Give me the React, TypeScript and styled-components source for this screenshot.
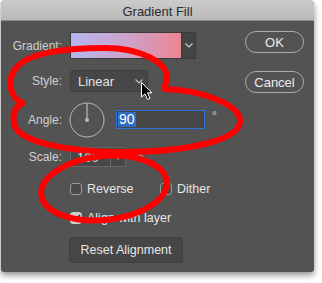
import React from 'react';
import styled, { createGlobalStyle } from 'styled-components';

const GlobalStyle = createGlobalStyle`
  html, body {
    margin: 0;
    padding: 0;
    background: #ffffff;
    width: 322px;
    height: 283px;
    overflow: hidden;
  }
  body {
    font-family: 'Liberation Sans', Arial, sans-serif;
    position: relative;
  }
`;

const Window = styled.div`
  width: 313px;
  height: 272px;
  margin-left: 1px;
  background: #535353;
  border-radius: 5px 5px 3px 3px;
  box-shadow: 0 3px 6px rgba(0, 0, 0, 0.45);
  overflow: hidden;
  display: flex;
  flex-direction: column;
`;

const TitleBar = styled.div`
  height: 21px;
  flex-shrink: 0;
  background: linear-gradient(#cbcbcb, #b9b9b9);
  border-bottom: 1px solid #8e8e8e;
  box-sizing: border-box;
  display: flex;
  align-items: center;
  justify-content: center;
  font-size: 13px;
  color: #2c2c2c;
  padding-top: 2px;
`;

const Body = styled.div`
  display: flex;
  justify-content: space-between;
  padding: 11px 10px 0 8px;
`;

const Form = styled.div`
  display: flex;
  flex-direction: column;
`;

const Row = styled.div<{ $mt: number; $h: number }>`
  display: flex;
  align-items: center;
  margin-top: ${(p) => p.$mt}px;
  height: ${(p) => p.$h}px;
`;

const Label = styled.div`
  width: 53px;
  margin-right: 8px;
  flex-shrink: 0;
  text-align: right;
  font-size: 12px;
  color: #d0d0d0;
`;

const Swatch = styled.div`
  width: 112px;
  height: 27px;
  box-sizing: border-box;
  border: 1px solid #3b3b3b;
  background: linear-gradient(90deg, #b5b6ee 0%, #cda3cb 50%, #eb8590 100%);
`;

const DropButton = styled.div<{ $w: number; $h: number }>`
  width: ${(p) => p.$w}px;
  height: ${(p) => p.$h}px;
  box-sizing: border-box;
  display: flex;
  align-items: center;
  justify-content: center;
  background: #444444;
  border: 1px solid #3b3b3b;
  border-left: none;
`;

const Select = styled.div`
  width: 78px;
  height: 22px;
  box-sizing: border-box;
  border: 1px solid #3e3e3e;
  border-radius: 3px;
  background: #474747;
  display: flex;
  align-items: center;
  justify-content: space-between;
  padding: 0 4px 0 7px;
  font-size: 13px;
  color: #e4e4e4;
`;

const Dial = styled.svg`
  width: 36px;
  height: 36px;
  margin-left: -1px;
  flex-shrink: 0;
`;

const AngleInput = styled.div`
  width: 89px;
  height: 19px;
  margin-left: 11px;
  box-sizing: border-box;
  border: 1px solid #2a72d6;
  background: #464646;
  display: flex;
  align-items: center;
  padding-left: 1px;
`;

const Selected = styled.span`
  background: #2f6dbf;
  color: #ffffff;
  font-size: 14px;
  line-height: 15px;
  padding: 0 1px;
`;

const Unit = styled.span<{ $ml: number; $up?: boolean }>`
  margin-left: ${(p) => p.$ml}px;
  font-size: 12px;
  color: #d8d8d8;
  align-self: ${(p) => (p.$up ? 'flex-start' : 'center')};
  margin-top: ${(p) => (p.$up ? '7px' : '0')};
`;

const ScaleBox = styled.div`
  display: flex;
  height: 20px;
`;

const ScaleInput = styled.div`
  width: 41px;
  height: 20px;
  box-sizing: border-box;
  border: 1px solid #676767;
  background: #474747;
  font-size: 13px;
  color: #e4e4e4;
  display: flex;
  align-items: center;
  padding-left: 6px;
`;

const ScaleDrop = styled.div`
  width: 15px;
  height: 20px;
  box-sizing: border-box;
  border: 1px solid #676767;
  border-left: none;
  background: #474747;
  display: flex;
  align-items: center;
  justify-content: center;
`;

const Check = styled.label<{ $w?: number }>`
  display: flex;
  align-items: center;
  width: ${(p) => (p.$w ? `${p.$w}px` : 'auto')};
  font-size: 12.5px;
  color: #e6e6e6;
`;

const Box = styled.span<{ $on?: boolean }>`
  width: 12px;
  height: 12px;
  box-sizing: border-box;
  border-radius: 3px;
  border: 1px solid ${(p) => (p.$on ? '#cfcfcf' : '#9c9c9c')};
  background: ${(p) => (p.$on ? '#cfcfcf' : '#4a4a4a')};
  margin-right: 5px;
  display: flex;
  align-items: center;
  justify-content: center;
  flex-shrink: 0;
`;

const PlainButton = styled.div`
  width: 114px;
  height: 26px;
  margin-left: -1px;
  box-sizing: border-box;
  border: 1px solid #3f3f3f;
  border-radius: 3px;
  background: #464646;
  display: flex;
  align-items: center;
  justify-content: center;
  font-size: 12.5px;
  color: #e6e6e6;
`;

const Actions = styled.div`
  width: 59px;
  margin-top: -1px;
  display: flex;
  flex-direction: column;
  gap: 18px;
`;

const PillButton = styled.div`
  height: 22px;
  box-sizing: border-box;
  border: 1px solid #a9a9a9;
  border-radius: 11px;
  display: flex;
  align-items: center;
  justify-content: center;
  font-size: 13px;
  color: #ececec;
`;

const Overlay = styled.svg`
  position: absolute;
  top: 0;
  left: 0;
  width: 322px;
  height: 283px;
  pointer-events: none;
`;

function Chevron({ color = '#cfcfcf' }: { color?: string }) {
  return (
    <svg width="8" height="5" viewBox="0 0 8 5">
      <polyline points="0.5,0.5 4,4 7.5,0.5" fill="none" stroke={color} strokeWidth="1.1" />
    </svg>
  );
}

function Tick() {
  return (
    <svg width="9" height="8" viewBox="0 0 9 8">
      <polyline points="1,4 3.5,6.5 8,1" fill="none" stroke="#333" strokeWidth="1.8" />
    </svg>
  );
}

export default function App() {
  return (
    <>
      <GlobalStyle />
      <Window>
        <TitleBar>Gradient Fill</TitleBar>
        <Body>
          <Form>
            <Row $mt={0} $h={27}>
              <Label>Gradient:</Label>
              <Swatch />
              <DropButton $w={14} $h={27}>
                <Chevron />
              </DropButton>
            </Row>
            <Row $mt={11} $h={22}>
              <Label>Style:</Label>
              <Select>
                Linear
                <Chevron color="#bdbdbd" />
              </Select>
            </Row>
            <Row $mt={10} $h={35}>
              <Label>Angle:</Label>
              <Dial viewBox="0 0 36 36">
                <circle cx="18" cy="18" r="17" fill="none" stroke="#b8b8b8" strokeWidth="1" />
                <line x1="18" y1="18" x2="18" y2="1.5" stroke="#cfcfcf" strokeWidth="1" />
                <circle cx="18" cy="18" r="2" fill="#b8b8b8" />
              </Dial>
              <AngleInput>
                <Selected>90</Selected>
              </AngleInput>
              <Unit $ml={7} $up>
                °
              </Unit>
            </Row>
            <Row $mt={10} $h={20}>
              <Label>Scale:</Label>
              <ScaleBox>
                <ScaleInput>100</ScaleInput>
                <ScaleDrop>
                  <Chevron color="#bdbdbd" />
                </ScaleDrop>
              </ScaleBox>
              <Unit $ml={7}>%</Unit>
            </Row>
            <Row $mt={15} $h={14}>
              <Label />
              <Check $w={90}>
                <Box />
                Reverse
              </Check>
              <Check>
                <Box />
                Dither
              </Check>
            </Row>
            <Row $mt={15} $h={14}>
              <Label />
              <Check>
                <Box $on>
                  <Tick />
                </Box>
                Align with layer
              </Check>
            </Row>
            <Row $mt={12} $h={26}>
              <Label />
              <PlainButton>Reset Alignment</PlainButton>
            </Row>
          </Form>
          <Actions>
            <PillButton>OK</PillButton>
            <PillButton>Cancel</PillButton>
          </Actions>
        </Body>
      </Window>
      <Overlay viewBox="0 0 322 283">
        <path
          d="M 23,103 C 8,98 6,75 20,64 C 35,52 70,48 105,48 C 140,48 167,62 167,78 C 167,85 162,88 165,89 C 200,90 240,104 240,121 C 240,140 190,151 130,152 C 70,153 18,142 14,124 C 12,112 16,106 23,103 Z"
          fill="none"
          stroke="#ff0000"
          strokeWidth="6"
          strokeLinejoin="round"
        />
        <ellipse
          cx="104"
          cy="188"
          rx="63"
          ry="32"
          transform="rotate(-6 104 188)"
          fill="none"
          stroke="#ff0000"
          strokeWidth="6"
        />
        <path
          d="M 141.5,82.5 L 141.5,97 L 145,93.8 L 147.6,99.5 L 150,98.4 L 147.5,92.8 L 152,92.8 Z"
          fill="#000"
          stroke="#fff"
          strokeWidth="1"
          strokeLinejoin="round"
        />
      </Overlay>
    </>
  );
}
